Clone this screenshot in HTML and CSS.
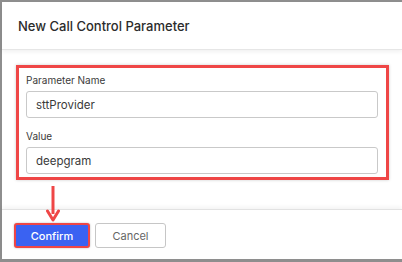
FILE: index.html
```html
<!DOCTYPE html>
<html lang="en">
<head>
    <meta charset="utf-8" />
    <title>New Call Control Parameter</title>
    <link rel="stylesheet" href="styles.css">
</head>
<body>
    <div class="dialog">
        <div class="dialog-header">
            <h1>New Call Control Parameter</h1>
        </div>

        <div class="dialog-body">
            <div class="highlight">
                <div class="input-group">
                    <label for="paramName">Parameter Name</label>
                    <input type="text" id="paramName" value="sttProvider" />
                </div>
                <div class="input-group">
                    <label for="paramValue">Value</label>
                    <input type="text" id="paramValue" value="deepgram" />
                </div>
            </div>
        </div>

        <div class="dialog-footer">
            <button class="btn btn-primary">Confirm</button>
            <button class="btn btn-default">Cancel</button>
        </div>

        <!-- annotation arrow pointing at confirm -->
        <svg class="arrow" width="14" height="36" viewBox="0 0 14 36">
            <line x1="7" y1="0" x2="7" y2="28" stroke="#ef4646" stroke-width="3" />
            <path d="M1.5 25 L7 34 L12.5 25" fill="none" stroke="#ef4646" stroke-width="3" stroke-linecap="round" stroke-linejoin="round" />
        </svg>
    </div>
</body>
</html>
```

FILE: styles.css
```css
* { box-sizing: border-box; margin: 0; padding: 0; }
body {
    font-family: Inter, 'Liberation Sans', sans-serif;
    -webkit-font-smoothing: antialiased;
    background: #8e8e8e;
    color: #333;
}
.dialog {
    position: relative;
    margin: 2px 0 0 2px;
    width: 400px;
    height: 257px;
    background: white;
    display: flex;
    flex-direction: column;
}
.dialog-header {
    height: 48px;
    padding: 0 16px;
    display: flex;
    align-items: center;
    border-bottom: 1px solid #e6e6e6;
    box-shadow: 0 2px 4px rgba(0,0,0,0.06);
}
.dialog-header h1 {
    font-size: 13px;
    font-weight: 500;
    color: #2b2b2b;
}
.dialog-body {
    height: 159px;
    padding: 15px 13px 0 14px;
}
.highlight {
    border: 3px solid #ef4646;
    padding: 5px 8px 3px 7px;
    box-shadow: 0 0 3px rgba(0,0,0,0.2);
}
.input-group + .input-group {
    margin-top: 11px;
}
label {
    display: block;
    font-size: 10px;
    line-height: 14px;
    color: #3a3a3a;
    margin-bottom: 4px;
}
input {
    width: 100%;
    height: 27px;
    padding: 0 9px;
    border: 1px solid #c9c9c9;
    border-radius: 3px;
    font-family: inherit;
    font-size: 11.5px;
    color: #3a3a3a;
}
.dialog-footer {
    flex: 1;
    border-top: 1px solid #e2e2e2;
    box-shadow: 0 -2px 4px rgba(0,0,0,0.05);
    padding: 13px 12px 0;
    display: flex;
    gap: 5px;
    align-items: flex-start;
}
.btn {
    height: 25px;
    border-radius: 3px;
    font-family: inherit;
    font-size: 11px;
    cursor: pointer;
}
.btn-primary {
    width: 76px;
    background: #3a62f2;
    color: white;
    font-weight: 500;
    border: 2px solid #ef4646;
    box-shadow: 0 0 2px rgba(0,0,0,0.3);
}
.btn-default {
    width: 71px;
    background: white;
    color: #666;
    border: 1px solid #c6c6c6;
}
.arrow {
    position: absolute;
    left: 44px;
    top: 184px;
}
```
